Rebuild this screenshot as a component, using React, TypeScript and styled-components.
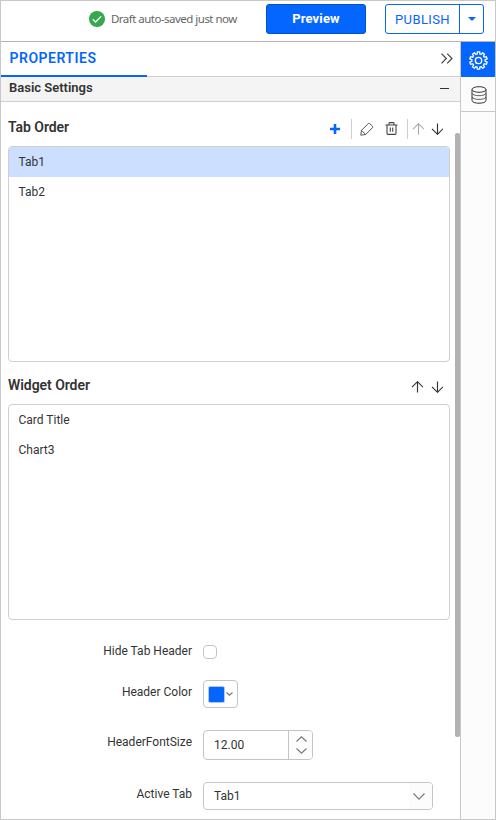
import React from "react";
import styled, { createGlobalStyle } from "styled-components";

const Global = createGlobalStyle`
  * { box-sizing: border-box; }
  body { margin: 0; background: #fff; font-family: Roboto, "Liberation Sans", sans-serif; color: #333; }
`;

const Frame = styled.div`
  width: 496px;
  height: 820px;
  border: 1px solid #c8c8c8;
  display: flex;
  flex-direction: column;
  overflow: hidden;
`;
const TopBar = styled.header`
  height: 41px;
  flex: none;
  border-bottom: 1px solid #b4b4b4;
  display: flex;
  align-items: flex-start;
  padding: 3px 10px 0 88px;
`;
const SaveStatus = styled.div`
  display: flex;
  align-items: center;
  height: 30px;
  width: 177px;
  font: 11.5px/16px "Noto Sans", sans-serif;
  letter-spacing: -0.52px;
  color: #666;
  white-space: nowrap;
  svg { margin-right: 6px; }
`;
const PreviewButton = styled.button`
  width: 100px;
  height: 30px;
  margin-right: 19px;
  padding: 0 0 1px;
  border: 1px solid #0051cc;
  border-radius: 3px;
  background: #0565ff;
  color: #fff;
  font: 700 13px/20px Roboto, sans-serif;
  letter-spacing: 0.15px;
`;
const SplitButton = styled.div`
  display: flex;
  width: 99px;
  height: 30px;
  border: 1px solid #0565ff;
  border-radius: 3px;
`;
const PublishButton = styled.button`
  width: 74px;
  padding: 1px 0 0;
  border: 0;
  border-right: 1px solid #0565ff;
  background: none;
  color: #0565ff;
  font: 400 13px/20px Roboto, sans-serif;
  letter-spacing: 0.4px;
`;
const PublishMenu = styled.button`
  flex: 1;
  display: flex;
  align-items: center;
  justify-content: center;
  padding: 0;
  border: 0;
  background: none;
`;
const Body = styled.div`
  flex: 1;
  min-height: 0;
  display: flex;
`;
const Panel = styled.main`
  width: 460px;
  border-right: 1px solid #c8c8c8;
  display: flex;
  flex-direction: column;
`;
const PanelHead = styled.div`
  height: 35px;
  flex: none;
  display: flex;
  justify-content: space-between;
  box-shadow: inset 0 -1px #cfcfcf;
`;
const PanelTab = styled.div`
  width: 146px;
  height: 35px;
  padding-left: 8.5px;
  border-bottom: 2px solid #0565ff;
  color: #0565ff;
  font-weight: 600;
  font-size: 14px;
  line-height: 33px;
  letter-spacing: 0.5px;
`;
const Collapse = styled.div`
  padding: 11px 7px 0 0;
  svg { display: block; }
`;
const SectionHead = styled.div`
  height: 25px;
  flex: none;
  display: flex;
  justify-content: space-between;
  padding: 0 11px 0 8px;
  background: #f4f4f4;
  border-bottom: 1px solid #cfcfcf;
  font-weight: 600;
  font-size: 13px;
  line-height: 22px;
`;
const Minus = styled.span`
  width: 9px;
  height: 1px;
  margin-top: 11px;
  background: #333;
`;
const ScrollArea = styled.div`
  flex: 1;
  min-height: 0;
  display: flex;
`;
const Content = styled.div`
  flex: 1;
  padding: 9px 5px 0 7px;
`;
const Scrollbar = styled.div`
  width: 5px;
  height: 604px;
  margin-top: 31px;
  border-radius: 2px;
  background: #b2b2b2;
`;
const GroupHead = styled.div<{ $top: number; $h: number }>`
  height: ${(p) => p.$h}px;
  padding: ${(p) => p.$top}px 3px 0 0;
  display: flex;
  justify-content: space-between;
  align-items: flex-start;
`;
const GroupTitle = styled.h2`
  margin: 0;
  font-weight: 600;
  font-size: 14px;
  line-height: 20px;
  letter-spacing: -0.05px;
`;
const Tools = styled.div`
  display: flex;
  align-items: center;
  height: 22px;
  padding-top: 1px;
  svg { display: block; }
`;
const Tool = styled.span<{ $w: number }>`
  width: ${(p) => p.$w}px;
  display: flex;
  justify-content: center;
`;
const Separator = styled.i`
  width: 1px;
  height: 20px;
  background: #cfcfcf;
`;
const List = styled.ul<{ $h: number }>`
  height: ${(p) => p.$h}px;
  width: 442px;
  margin: 0;
  padding: 0;
  list-style: none;
  border: 1px solid #cfcfcf;
  border-radius: 4px;
  overflow: hidden;
`;
const Item = styled.li<{ $active?: boolean }>`
  height: 30px;
  padding-left: 9.5px;
  font-size: 12px;
  line-height: 30px;
  background: ${(p) => (p.$active ? "#cddfff" : "transparent")};
`;
const Field = styled.div<{ $h: number; $gap: number }>`
  display: flex;
  height: ${(p) => p.$h}px;
  margin-top: ${(p) => p.$gap}px;
`;
const Label = styled.label<{ $lh: number }>`
  width: 184px;
  margin-right: 11px;
  text-align: right;
  font-size: 12px;
  line-height: ${(p) => p.$lh}px;
`;
const Control = styled.div<{ $w: number }>`
  width: ${(p) => p.$w}px;
  border: 1px solid #c4c4c4;
  border-radius: 4px;
  display: flex;
  align-items: center;
  overflow: hidden;
`;
const Swatch = styled.span`
  width: 17px;
  height: 17px;
  margin: 0 1px 0 4px;
  border: 1px solid #b7c5df;
  border-radius: 2px;
  background: #0565ff;
`;
const Value = styled.span`
  flex: 1;
  padding-left: 10px;
  font-size: 12px;
`;
const Spinner = styled.span`
  width: 24px;
  height: 100%;
  padding-left: 1px;
  border-left: 1px solid #c4c4c4;
  background: #fdfdfd;
  display: flex;
  flex-direction: column;
  align-items: center;
  justify-content: center;
  gap: 6px;
`;
const DropArrow = styled.span`
  width: 23px;
  height: 100%;
  padding-right: 3px;
  background: #fcfcfc;
  display: flex;
  align-items: center;
  justify-content: center;
`;
const Rail = styled.nav`
  flex: 1;
  background: #fcfcfc;
`;
const RailItem = styled.div<{ $active?: boolean }>`
  height: 35px;
  display: flex;
  align-items: center;
  justify-content: center;
  padding: 1px 0 0 1px;
  background: ${(p) => (p.$active ? "#0565ff" : "#fcfcfc")};
  border-bottom: ${(p) => (p.$active ? "0" : "1px solid #c8c8c8")};
`;

const Arrow = ({ down, muted }: { down?: boolean; muted?: boolean }) => (
  <svg width="12" height="12" viewBox="0 0 12 12" fill="none" stroke={muted ? "#aaa" : "#333"} strokeWidth="1.15">
    <path d={down ? "M6.5 .5V11M1 5.8L6.5 11.3L12 5.8" : "M6.5 1V11.5M1 6.2L6.5 .7L12 6.2"} />
  </svg>
);

const Chevron = ({ w, h, up }: { w: number; h: number; up?: boolean }) => (
  <svg width={w} height={h} fill="none" stroke="#777" strokeWidth="1.1">
    <path d={up ? `M.5 ${h - 0.5}L${w / 2} .8L${w - 0.5} ${h - 0.5}` : `M.5 .5L${w / 2} ${h - 0.8}L${w - 0.5} .5`} />
  </svg>
);

/* Builds a closed outline with ten square-ended teeth around the hub. */
const gearPath = (() => {
  const points: string[] = [];
  for (let i = 0; i < 10; i++) {
    const base = i * 36;
    [[-11, 6.7], [-8, 8.8], [8, 8.8], [11, 6.7]].forEach(([offset, r]) => {
      const a = ((base + offset) * Math.PI) / 180;
      points.push(`${(9.5 + r * Math.sin(a)).toFixed(2)} ${(9.5 - r * Math.cos(a)).toFixed(2)}`);
    });
  }
  return `M${points.join("L")}Z`;
})();

export default function App() {
  return (
    <>
      <Global />
      <Frame>
        <TopBar>
          <SaveStatus>
            <svg width="16" height="16" viewBox="0 0 16 16">
              <circle cx="8" cy="8" r="8" fill="#34a84a" />
              <path d="M3.8 8.2L6.6 11L12.2 5.3" fill="none" stroke="#fff" strokeWidth="1.3" />
            </svg>
            Draft auto-saved just now
          </SaveStatus>
          <PreviewButton>Preview</PreviewButton>
          <SplitButton>
            <PublishButton>PUBLISH</PublishButton>
            <PublishMenu>
              <svg width="8" height="4"><path d="M0 0H8L4 4Z" fill="#0565ff" /></svg>
            </PublishMenu>
          </SplitButton>
        </TopBar>
        <Body>
          <Panel>
            <PanelHead>
              <PanelTab>PROPERTIES</PanelTab>
              <Collapse>
                <svg width="12" height="11" fill="none" stroke="#444" strokeWidth="1.2">
                  <path d="M.5 .7L5.3 5.5L.5 10.3M6.2 .7L11 5.5L6.2 10.3" />
                </svg>
              </Collapse>
            </PanelHead>
            <SectionHead>Basic Settings<Minus /></SectionHead>
            <ScrollArea>
              <Content>
                <GroupHead $top={6} $h={35}>
                  <GroupTitle>Tab Order</GroupTitle>
                  <Tools>
                    <Tool $w={32}>
                      <svg width="10" height="10"><path d="M5 0V10M0 5H10" stroke="#0565ff" strokeWidth="2.6" /></svg>
                    </Tool>
                    <Separator />
                    <Tool $w={29}>
                      <svg width="14" height="14" fill="none" stroke="#555" strokeWidth="1">
                        <path d="M.8 13.2L1.5 8.3L8.3 1.5Q9 .8 9.7 1.5L12.5 4.3Q13.2 5 12.5 5.7L5.7 12.5ZM1.5 8.3L5.7 12.5" />
                      </svg>
                    </Tool>
                    <Tool $w={21}>
                      <svg width="13" height="13" fill="none" stroke="#444" strokeWidth="1.1">
                        <path d="M.5 3H12.5M4 3V1.3Q4 .6 4.7 .6H8.3Q9 .6 9 1.3V3M2 3V11.3Q2 12.4 3 12.4H10Q11 12.4 11 11.3V3M5.3 5.5V9.8M7.7 5.5V9.8" />
                      </svg>
                    </Tool>
                    <Tool $w={5} />
                    <Separator />
                    <Tool $w={19}><Arrow muted /></Tool>
                    <Tool $w={20}><Arrow down /></Tool>
                  </Tools>
                </GroupHead>
                <List $h={216}>
                  <Item $active>Tab1</Item>
                  <Item>Tab2</Item>
                </List>
                <GroupHead $top={13} $h={42}>
                  <GroupTitle>Widget Order</GroupTitle>
                  <Tools>
                    <Tool $w={20}><Arrow /></Tool>
                    <Tool $w={20}><Arrow down /></Tool>
                  </Tools>
                </GroupHead>
                <List $h={216}>
                  <Item>Card Title</Item>
                  <Item>Chart3</Item>
                </List>
                <Field $h={14} $gap={25}>
                  <Label $lh={13}>Hide Tab Header</Label>
                  <Control $w={14} />
                </Field>
                <Field $h={28} $gap={21}>
                  <Label $lh={25}>Header Color</Label>
                  <Control $w={35}><Swatch /><Chevron w={7} h={4} /></Control>
                </Field>
                <Field $h={30} $gap={22}>
                  <Label $lh={25}>HeaderFontSize</Label>
                  <Control $w={110}>
                    <Value>12.00</Value>
                    <Spinner><Chevron w={11} h={6} up /><Chevron w={11} h={6} /></Spinner>
                  </Control>
                </Field>
                <Field $h={28} $gap={22}>
                  <Label $lh={25}>Active Tab</Label>
                  <Control $w={230}>
                    <Value>Tab1</Value>
                    <DropArrow><Chevron w={12} h={7} /></DropArrow>
                  </Control>
                </Field>
              </Content>
              <Scrollbar />
            </ScrollArea>
          </Panel>
          <Rail>
            <RailItem $active>
              <svg width="19" height="19" fill="none" stroke="#fff" strokeWidth="1.3" strokeLinejoin="round">
                <path d={gearPath} /><circle cx="9.5" cy="9.5" r="3.2" />
              </svg>
            </RailItem>
            <RailItem>
              <svg width="16" height="18" fill="none" stroke="#333" strokeWidth="1">
                <ellipse cx="8" cy="3.5" rx="7" ry="2.8" />
                <path d="M1 3.5V14.3C1 18.2 15 18.2 15 14.3V3.5" />
                <path d="M1 7.3C2 10.5 14 10.5 15 7.3M1 11C2 14.2 14 14.2 15 11" strokeWidth=".8" />
              </svg>
            </RailItem>
          </Rail>
        </Body>
      </Frame>
    </>
  );
}
